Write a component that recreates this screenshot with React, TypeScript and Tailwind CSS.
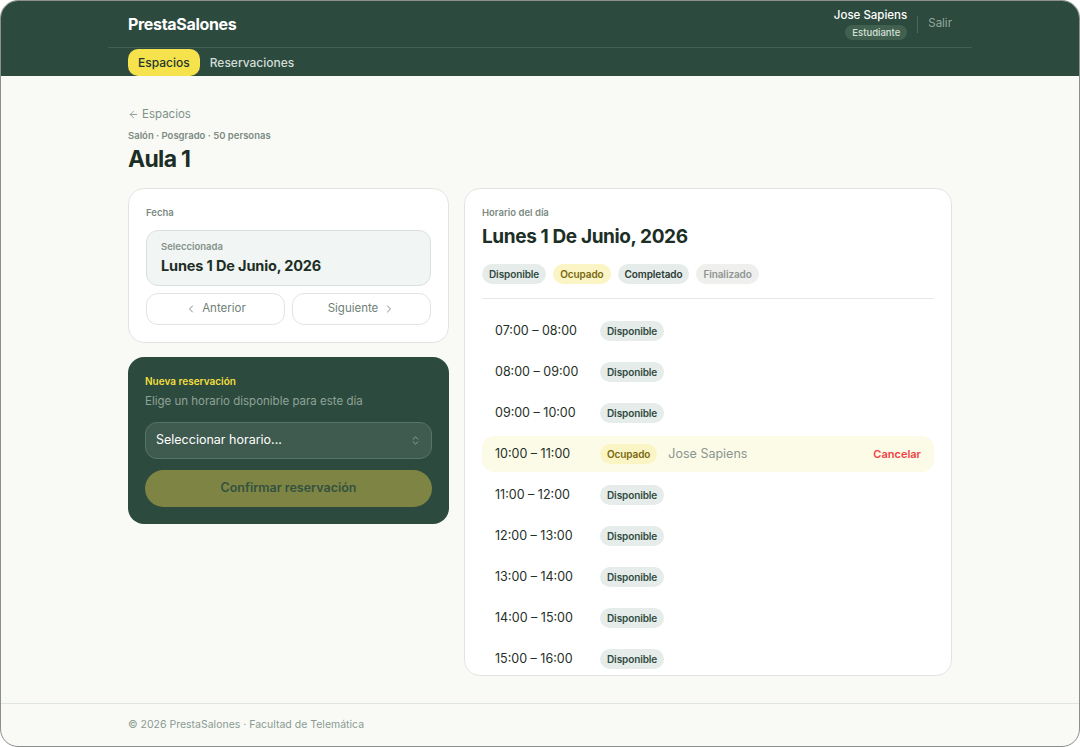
import { ChevronLeft, ChevronRight, ChevronsUpDown, ArrowLeft } from 'lucide-react'

type Slot = { time: string; status: 'Disponible' | 'Ocupado'; who?: string }

const slots: Slot[] = [
  { time: '07:00 – 08:00', status: 'Disponible' },
  { time: '08:00 – 09:00', status: 'Disponible' },
  { time: '09:00 – 10:00', status: 'Disponible' },
  { time: '10:00 – 11:00', status: 'Ocupado', who: 'Jose Sapiens' },
  { time: '11:00 – 12:00', status: 'Disponible' },
  { time: '12:00 – 13:00', status: 'Disponible' },
  { time: '13:00 – 14:00', status: 'Disponible' },
  { time: '14:00 – 15:00', status: 'Disponible' },
  { time: '15:00 – 16:00', status: 'Disponible' },
]

function Chip({ label, tone }: { label: string; tone: 'green' | 'yellow' | 'dark' | 'muted' }) {
  const cls =
    tone === 'yellow'
      ? 'bg-[#fbf5c6] text-[#7a6810]'
      : tone === 'muted'
        ? 'bg-[#efefed] text-[#8f9692]'
        : tone === 'dark'
          ? 'bg-[#e6ece9] text-[#2b3b33]'
          : 'bg-[#e6ece9] text-[#2f4a3e]'
  return <span className={`inline-flex h-5 items-center rounded-full px-[7px] text-[10px] font-semibold tracking-[-0.01em] ${cls}`}>{label}</span>
}

export default function App() {
  return (
    <div className="h-[747px] w-[1080px] bg-white" style={{ fontFamily: 'Inter, "Noto Sans", sans-serif' }}>
      <div className="flex h-full flex-col overflow-hidden rounded-[18px] border border-[#8d8f8c] bg-[#f9faf6]">
        {/* Header */}
        <header className="bg-[#2d4a3e]">
          <div className="mx-auto w-[864px]">
            <div className="flex h-[47px] items-center justify-between border-b border-[#41604f] px-5">
              <span className="text-[16px] font-bold tracking-[-0.02em] text-white">PrestaSalones</span>
              <div className="flex items-center gap-[10px]">
                <div className="flex flex-col items-end">
                  <span className="text-[11.5px] font-medium leading-[15px] text-white">Jose Sapiens</span>
                  <span className="mt-[2px] rounded-full bg-[#41604f] px-[7px] py-[1px] text-[9.5px] font-medium leading-[13px] text-[#d6e0da]">
                    Estudiante
                  </span>
                </div>
                <span className="h-[17px] w-px bg-[#4d6b5d]" />
                <span className="text-[11.5px] text-[#93a89d]">Salir</span>
              </div>
            </div>
            <nav className="flex h-[28px] items-end gap-[10px] px-5">
              <span className="flex h-[27px] items-center rounded-[10px] bg-[#f5e24c] px-[10px] text-[12px] font-medium text-[#23372d]">
                Espacios
              </span>
              <span className="flex h-[27px] items-center text-[12px] font-medium text-[#d3ddd7]">Reservaciones</span>
            </nav>
          </div>
        </header>

        {/* Main */}
        <main className="flex-1">
          <div className="mx-auto w-[824px] pt-[30px]">
            <div className="flex items-center gap-[3px] text-[11.5px] text-[#7f9088]">
              <ArrowLeft size={11} strokeWidth={1.8} />
              Espacios
            </div>
            <div className="mt-[6px] text-[9.5px] font-semibold text-[#7c8a83]">Salón · Posgrado · 50 personas</div>
            <h1 className="mt-[1px] text-[23px] font-bold leading-[28px] tracking-[-0.03em] text-[#1c2e25]">Aula 1</h1>

            <div className="mt-[15px] grid grid-cols-[321px_1fr] items-start gap-[15px]">
              {/* Left column */}
              <div className="flex flex-col gap-[14px]">
                <div className="rounded-2xl border border-[#dfe6e2] bg-white p-[17px]">
                  <div className="text-[9.5px] font-semibold text-[#7c8a83]">Fecha</div>
                  <div className="mt-[10px] rounded-xl border border-[#d9e2dd] bg-[#f1f5f3] px-[14px] pb-[9px] pt-[9px]">
                    <div className="text-[9.5px] font-semibold leading-[13px] text-[#84928b]">Seleccionada</div>
                    <div className="mt-[3px] text-[14.5px] font-bold leading-[20px] tracking-[-0.01em] text-[#1c2e25]">Lunes 1 De Junio, 2026</div>
                  </div>
                  <div className="mt-[7px] grid grid-cols-2 gap-[7px]">
                    <button className="flex h-[32px] items-center justify-center gap-[5px] rounded-xl border border-[#dfe6e2] bg-white text-[11.5px] text-[#6f7f77]">
                      <ChevronLeft size={12} strokeWidth={1.8} />
                      Anterior
                    </button>
                    <button className="flex h-[32px] items-center justify-center gap-[5px] rounded-xl border border-[#dfe6e2] bg-white text-[11.5px] text-[#6f7f77]">
                      Siguiente
                      <ChevronRight size={12} strokeWidth={1.8} />
                    </button>
                  </div>
                </div>

                <div className="rounded-2xl bg-[#2d4a3e] p-[17px]">
                  <div className="text-[10px] font-semibold text-[#f3df3f]">Nueva reservación</div>
                  <div className="mt-[4px] text-[11.5px] text-[#8ea397]">Elige un horario disponible para este día</div>
                  <div className="mt-[12px] flex h-[37px] items-center justify-between rounded-xl border border-[#587367] bg-[#3f5b4f] px-[10px] text-[12.5px] text-white">
                    Seleccionar horario...
                    <ChevronsUpDown size={11} strokeWidth={1.6} className="text-[#a6b7ad]" />
                  </div>
                  <button className="mt-[11px] flex h-[37px] w-full items-center justify-center rounded-full bg-[#7e8544] text-[12.5px] font-semibold text-[#34513f]">
                    Confirmar reservación
                  </button>
                </div>
              </div>

              {/* Right column */}
              <div className="h-[488px] overflow-hidden rounded-2xl border border-[#dfe6e2] bg-white px-[17px] pt-[17px]">
                <div className="text-[9.5px] font-semibold text-[#7c8a83]">Horario del día</div>
                <div className="mt-[3px] text-[19px] font-bold tracking-[-0.02em] text-[#1c2e25]">Lunes 1 De Junio, 2026</div>
                <div className="mt-[13px] flex gap-[7px]">
                  <Chip label="Disponible" tone="green" />
                  <Chip label="Ocupado" tone="yellow" />
                  <Chip label="Completado" tone="dark" />
                  <Chip label="Finalizado" tone="muted" />
                </div>
                <div className="mt-[14px] border-t border-[#e3eae6]" />
                <div className="mt-[14px] flex flex-col gap-[5px]">
                  {slots.map((s) => (
                    <div
                      key={s.time}
                      className={`flex h-[36px] shrink-0 items-center rounded-xl px-[13px] ${s.status === 'Ocupado' ? 'bg-[#fcfbe8]' : ''}`}
                    >
                      <span className="w-[105px] text-[12.5px] text-[#1f3028]">{s.time}</span>
                      {s.status === 'Ocupado' ? (
                        <>
                          <Chip label="Ocupado" tone="yellow" />
                          <span className="ml-[11px] text-[12.5px] text-[#8a968f]">{s.who}</span>
                          <span className="ml-auto text-[11px] font-semibold text-[#ef4444]">Cancelar</span>
                        </>
                      ) : (
                        <Chip label="Disponible" tone="green" />
                      )}
                    </div>
                  ))}
                </div>
              </div>
            </div>
          </div>
        </main>

        {/* Footer */}
        <footer className="border-t border-[#dfe6e2]">
          <div className="mx-auto flex h-[42px] w-[824px] items-center text-[10.5px] text-[#8a9a92]">
            © 2026 PrestaSalones · Facultad de Telemática
          </div>
        </footer>
      </div>
    </div>
  )
}
